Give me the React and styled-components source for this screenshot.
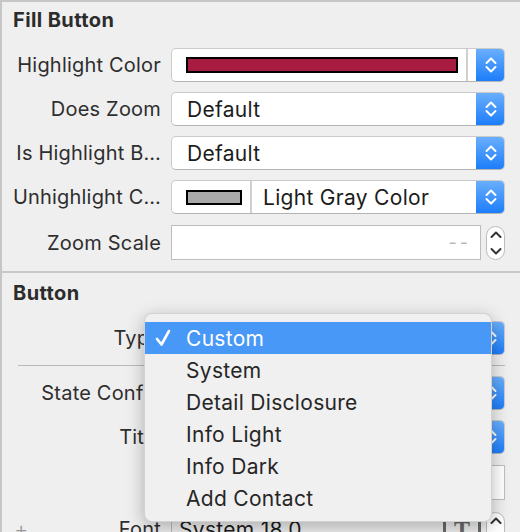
import styled, { createGlobalStyle } from "styled-components";

const Global = createGlobalStyle`
  html, body {
    margin: 0;
    background: #efefef;
  }
  body {
    font-family: Inter, "Liberation Sans", sans-serif;
  }
`;

function Chevrons({ color = "#fff" }) {
  return (
    <svg width="12" height="16" viewBox="0 0 12 16">
      <path
        d="M1.5 6 L6 1.5 L10.5 6 M1.5 10 L6 14.5 L10.5 10"
        fill="none"
        stroke={color}
        strokeWidth="2"
        strokeLinecap="round"
        strokeLinejoin="round"
      />
    </svg>
  );
}

function StepArrows() {
  return (
    <svg width="12" height="26" viewBox="0 0 12 26">
      <path
        d="M1.5 7 L6 2.5 L10.5 7 M1.5 19 L6 23.5 L10.5 19"
        fill="none"
        stroke="#333"
        strokeWidth="2"
        strokeLinecap="round"
        strokeLinejoin="round"
      />
    </svg>
  );
}

function Check() {
  return (
    <svg width="16" height="18" viewBox="0 0 16 18">
      <path
        d="M2 10 L6.5 15.5 L14 2"
        fill="none"
        stroke="#fff"
        strokeWidth="2.6"
        strokeLinecap="round"
        strokeLinejoin="round"
      />
    </svg>
  );
}

const menuItems = [
  "Custom",
  "System",
  "Detail Disclosure",
  "Info Light",
  "Info Dark",
  "Add Contact",
];

export default function App() {
  return (
    <>
      <Global />
      <Page>
        <Section>
          <Header>Fill Button</Header>
          <Rows>
            <Row>
              <Label>Highlight Color</Label>
              <PopUp>
                <Well width={296}>
                  <Swatch w={272} h={16} color="#a71c40" />
                </Well>
                <Spacer />
                <Stepper>
                  <Chevrons />
                </Stepper>
              </PopUp>
            </Row>
            <Row>
              <Label>Does Zoom</Label>
              <PopUp>
                <PopText>Default</PopText>
                <Stepper>
                  <Chevrons />
                </Stepper>
              </PopUp>
            </Row>
            <Row>
              <Label>Is Highlight B…</Label>
              <PopUp>
                <PopText>Default</PopText>
                <Stepper>
                  <Chevrons />
                </Stepper>
              </PopUp>
            </Row>
            <Row>
              <Label>Unhighlight C…</Label>
              <PopUp>
                <Well width={80}>
                  <Swatch w={56} h={15} color="#a9a9a9" />
                </Well>
                <PopText pad={11}>Light Gray Color</PopText>
                <Stepper>
                  <Chevrons />
                </Stepper>
              </PopUp>
            </Row>
            <Row tall>
              <Label>Zoom Scale</Label>
              <FieldGroup>
                <TextField>
                  <Placeholder>--</Placeholder>
                </TextField>
                <Pill>
                  <StepArrows />
                </Pill>
              </FieldGroup>
            </Row>
          </Rows>
        </Section>

        <Divider />

        <Section top={9}>
          <Header>Button</Header>
          <Row>
            <Label>Type</Label>
            <PopUp>
              <Spacer />
              <Stepper>
                <Chevrons />
              </Stepper>
            </PopUp>
          </Row>
          <Line />
          <Rows>
            <Row>
              <Label>State Config</Label>
              <PopUp>
                <Spacer />
                <Stepper>
                  <Chevrons />
                </Stepper>
              </PopUp>
            </Row>
            <Row>
              <Label>Title</Label>
              <PopUp>
                <Spacer />
                <Stepper>
                  <Chevrons />
                </Stepper>
              </PopUp>
            </Row>
            <Row tall>
              <Label />
              <TextField full />
            </Row>
            <Row low>
              <LabelCell>
                <Plus>+</Plus>
                <LabelText>Font</LabelText>
              </LabelCell>
              <FieldGroup>
                <FontField>System 18.0</FontField>
                <FontIcon>T</FontIcon>
                <Pill>
                  <StepArrows />
                </Pill>
              </FieldGroup>
            </Row>
          </Rows>
        </Section>

        <Menu>
          {menuItems.map((item, i) => (
            <MenuItem key={item} active={i === 0}>
              <CheckSlot>{i === 0 && <Check />}</CheckSlot>
              {item}
            </MenuItem>
          ))}
        </Menu>
      </Page>
    </>
  );
}

/* Styled Components */
const Page = styled.div`
  position: relative;
  width: 520px;
  height: 532px;
  box-sizing: border-box;
  overflow: hidden;
  background: #efefef;
  border-top: 2px solid #c6c6c6;
  border-left: 2px solid #c6c6c6;
`;

const Section = styled.div`
  padding: ${(p) => p.top ?? 7}px 15px 0 0;
`;

const Header = styled.div`
  margin: 0 0 17px 11px;
  font-size: 20px;
  font-weight: 700;
  letter-spacing: 0.4px;
  line-height: 22px;
  color: #2c2c2c;
`;

const Rows = styled.div`
  display: flex;
  flex-direction: column;
  gap: 10px;
`;

const Row = styled.div`
  display: grid;
  grid-template-columns: 159px 334px;
  column-gap: 10px;
  align-items: center;
  height: ${(p) => (p.tall ? 35 : 34)}px;
  margin-top: ${(p) => (p.tall ? 1 : p.low ? 2 : 0)}px;
`;

const Label = styled.div`
  text-align: right;
  font-size: 20px;
  letter-spacing: 0.2px;
  color: #2e2e2e;
  white-space: nowrap;
`;

const LabelCell = styled.div`
  display: flex;
  justify-content: space-between;
  align-items: center;
  padding-left: 12px;
`;

const LabelText = styled.span`
  font-size: 20px;
  letter-spacing: 0.2px;
  color: #2e2e2e;
`;

const Plus = styled.span`
  font-size: 22px;
  font-weight: 300;
  color: #9a9a9a;
`;

const PopUp = styled.div`
  display: flex;
  height: 34px;
  box-sizing: border-box;
  background: #fff;
  border: 1px solid #cbcbcb;
  border-bottom-color: #b3b3b3;
  border-radius: 5px;
  overflow: hidden;
`;

const PopText = styled.div`
  flex: 1;
  display: flex;
  align-items: center;
  padding-left: ${(p) => p.pad ?? 15}px;
  font-size: 21px;
  letter-spacing: 0.3px;
  color: #1c1c1c;
  white-space: nowrap;
`;

const Well = styled.div`
  display: flex;
  align-items: center;
  width: ${(p) => p.width}px;
  padding-left: 14px;
  box-sizing: border-box;
  border-right: 2px solid #d0d0d0;
`;

const Swatch = styled.div`
  width: ${(p) => p.w}px;
  height: ${(p) => p.h}px;
  box-sizing: border-box;
  border: 2px solid #000;
  background: ${(p) => p.color};
`;

const Spacer = styled.div`
  flex: 1;
`;

const Stepper = styled.div`
  width: 29px;
  margin: -1px -1px -1px 0;
  display: flex;
  align-items: center;
  justify-content: center;
  background: linear-gradient(#6cb0fd, #1a7cf9);
`;

const FieldGroup = styled.div`
  display: flex;
  align-items: center;
  gap: 5px;
  height: 100%;
`;

const TextField = styled.div`
  width: ${(p) => (p.full ? 334 : 310)}px;
  height: 100%;
  box-sizing: border-box;
  display: flex;
  align-items: center;
  justify-content: flex-end;
  padding-right: 9px;
  background: #fff;
  border: 1px solid #bdbdbd;
`;

const Placeholder = styled.span`
  font-size: 18px;
  letter-spacing: 3px;
  color: #b8b8b8;
`;

const Pill = styled.div`
  width: 19px;
  height: 34px;
  box-sizing: border-box;
  display: flex;
  align-items: center;
  justify-content: center;
  background: #fff;
  border: 1px solid #bcbcbc;
  border-radius: 10px;
`;

const FontField = styled.div`
  flex: 1;
  height: 100%;
  box-sizing: border-box;
  display: flex;
  align-items: center;
  padding-left: 7px;
  font-size: 21px;
  letter-spacing: 0.3px;
  color: #1c1c1c;
  border-left: 1px solid #bdbdbd;
`;

const FontIcon = styled.div`
  width: 32px;
  text-align: center;
  font-family: "Liberation Serif", serif;
  font-size: 24px;
  font-weight: 700;
  color: #6a6a6a;
  border-left: 3px solid #6a6a6a;
  border-right: 3px solid #6a6a6a;
`;

const Divider = styled.div`
  height: 2px;
  margin-top: 11px;
  background: #c8c8c8;
`;

const Line = styled.div`
  height: 1px;
  margin: 10px 0 10px 16px;
  background: #bababa;
`;

const Menu = styled.div`
  position: absolute;
  left: 142px;
  top: 311px;
  width: 348px;
  height: 209px;
  box-sizing: border-box;
  padding: 8px 0;
  background: #f0f0f0;
  border: 1px solid rgba(0, 0, 0, 0.12);
  border-radius: 8px;
  box-shadow: 0 5px 18px rgba(0, 0, 0, 0.28);
`;

const MenuItem = styled.div`
  display: flex;
  align-items: center;
  height: 32px;
  font-size: 21px;
  letter-spacing: 0.3px;
  color: ${(p) => (p.active ? "#fff" : "#262626")};
  background: ${(p) => (p.active ? "#4898f7" : "transparent")};
`;

const CheckSlot = styled.div`
  width: 41px;
  padding-left: 10px;
  box-sizing: border-box;
  display: flex;
  align-items: center;
`;
